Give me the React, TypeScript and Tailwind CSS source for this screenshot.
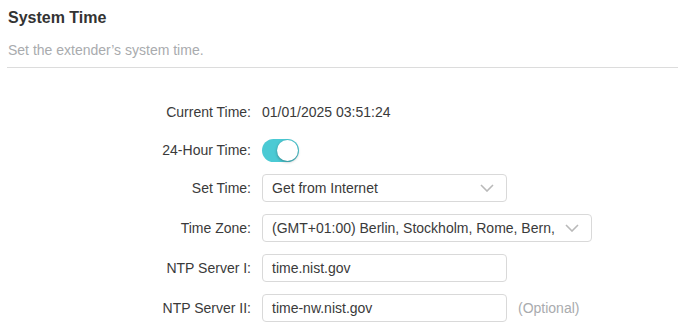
import React from "react";

function Chevron() {
  return (
    <svg width="14" height="8" viewBox="0 0 14 8" className="shrink-0">
      <path d="M1 1 L7 7 L13 1" fill="none" stroke="#b9b9b9" strokeWidth="1.6" />
    </svg>
  );
}

function Row({ label, children, h }: { label: string; children: React.ReactNode; h: string }) {
  return (
    <div className={`flex items-center ${h}`}>
      <div className="w-[252px] text-right pr-px text-[14px] text-[#3a3a3a]">{label}</div>
      <div className="ml-[10px] flex items-center">{children}</div>
    </div>
  );
}

export default function App() {
  return (
    <div className="w-[686px] h-[336px] bg-white" style={{ fontFamily: '"Liberation Sans", Arial, sans-serif' }}>
      <div className="px-[7px] pt-[6px]">
        <div className="pl-px text-[16px] leading-[24px] font-bold text-[#333]">System Time</div>
        <div className="pl-px mt-[12px] text-[14px] leading-[16px] text-[#a9abae]">Set the extender’s system time.</div>
        <div className="mt-[9px] h-px bg-[#dcdcdc] w-[671px]" />
      </div>
      <div className="mt-[24px] flex flex-col">
        <Row label="Current Time:" h="h-[40px]">
          <span className="text-[14px] text-[#3a3a3a]">01/01/2025 03:51:24</span>
        </Row>
        <Row label="24-Hour Time:" h="h-[36px]">
          <div className="relative w-[37px] h-[23px] rounded-full bg-[#4bcad4]">
            <div className="absolute right-[1px] top-[1px] w-[21px] h-[21px] rounded-full bg-white shadow-[0_1px_3px_rgba(0,0,0,0.35)]" />
          </div>
        </Row>
        <Row label="Set Time:" h="h-[40px]">
          <div className="w-[245px] h-[28px] border border-[#d9d9d9] rounded-[4px] flex items-center justify-between pl-[9px] pr-[12px] text-[14px] text-[#3a3a3a]">
            <span>Get from Internet</span>
            <Chevron />
          </div>
        </Row>
        <Row label="Time Zone:" h="h-[40px]">
          <div className="w-[330px] h-[28px] border border-[#d9d9d9] rounded-[4px] flex items-center justify-between pl-[9px] pr-[12px] text-[14px] text-[#3a3a3a]">
            <span className="whitespace-nowrap overflow-hidden">(GMT+01:00) Berlin, Stockholm, Rome, Bern,</span>
            <Chevron />
          </div>
        </Row>
        <Row label="NTP Server I:" h="h-[40px]">
          <div className="w-[245px] h-[28px] border border-[#d9d9d9] rounded-[4px] flex items-center pl-[9px] text-[14px] text-[#3a3a3a]">
            time.nist.gov
          </div>
        </Row>
        <Row label="NTP Server II:" h="h-[40px]">
          <div className="w-[245px] h-[28px] border border-[#d9d9d9] rounded-[4px] flex items-center pl-[9px] text-[14px] text-[#3a3a3a]">
            time-nw.nist.gov
          </div>
          <span className="ml-[11px] text-[14px] text-[#a9abae]">(Optional)</span>
        </Row>
      </div>
    </div>
  );
}
